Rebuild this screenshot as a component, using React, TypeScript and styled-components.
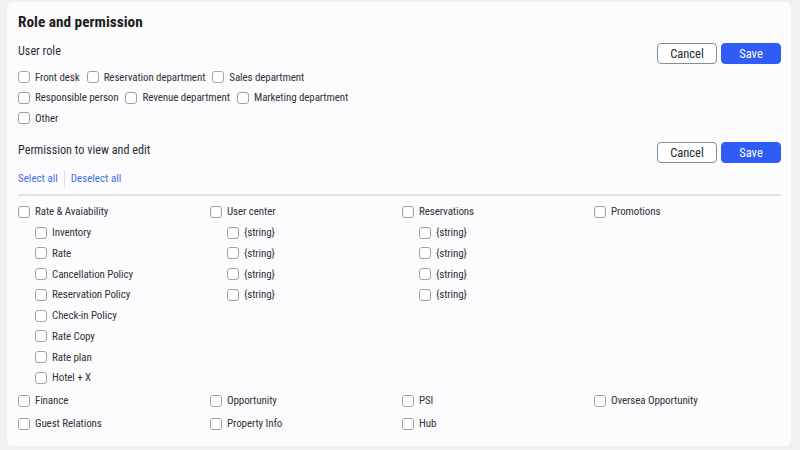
import React from "react";
import styled, { createGlobalStyle } from "styled-components";

const GlobalStyle = createGlobalStyle`
  html, body { margin: 0; padding: 0; }
  body {
    background: #f1f1f4;
    font-family: "Roboto Condensed", "Roboto", "Liberation Sans", sans-serif;
    color: #2a2a2e;
  }
  * { box-sizing: border-box; }
`;

const Page = styled.div`
  width: 800px;
  height: 450px;
  padding: 2px 9px 4px 7px;
`;

const Card = styled.div`
  height: 100%;
  background: #fcfcfe;
  border-radius: 6px;
  padding: 10px 10px 0 11px;
`;

const Title = styled.h1`
  margin: 0;
  font-size: 15.3px;
  line-height: 20px;
  font-weight: 700;
  color: #1c1c20;
`;

const SectionHead = styled.div<{ $mt: number }>`
  display: flex;
  justify-content: space-between;
  align-items: flex-start;
  margin-top: ${(p) => p.$mt}px;
`;

const SectionLabel = styled.div`
  font-size: 12.2px;
  line-height: 16px;
  color: #2e2e32;
`;

const Buttons = styled.div`
  display: flex;
  gap: 4px;
`;

const Button = styled.button<{ $primary?: boolean }>`
  width: 60px;
  height: 21px;
  border-radius: 4px;
  font-family: inherit;
  font-size: 12.5px;
  padding: 0;
  cursor: pointer;
  border: 1px solid ${(p) => (p.$primary ? "#2f5cf6" : "#8c8c90")};
  background: ${(p) => (p.$primary ? "#2f5cf6" : "#ffffff")};
  color: ${(p) => (p.$primary ? "#ffffff" : "#2a2a2e")};
`;

const RoleList = styled.div`
  margin-top: 2.75px;
  display: flex;
  flex-direction: column;
`;

const RoleRow = styled.div`
  display: flex;
  height: 20.5px;
  align-items: center;
`;

const Item = styled.label<{ $indent?: boolean; $h?: number }>`
  display: flex;
  align-items: center;
  gap: 5px;
  height: ${(p) => p.$h ?? 20.75}px;
  padding-left: ${(p) => (p.$indent ? 17 : 0)}px;
  margin-right: 7px;
  font-size: 11px;
  letter-spacing: -0.1px;
  color: #333337;
  white-space: nowrap;
`;

const Box = styled.span`
  display: inline-block;
  width: 12px;
  height: 12px;
  border: 1px solid #a2a2a8;
  border-radius: 3px;
  background: #ffffff;
  flex: none;
`;

const LinkRow = styled.div`
  display: flex;
  align-items: center;
  margin-top: 8px;
  height: 16px;
`;

const Link = styled.a`
  font-size: 11px;
  line-height: 16px;
  color: #3f6ee6;
  text-decoration: none;
  cursor: pointer;
`;

const VSep = styled.span`
  width: 1px;
  height: 16px;
  background: #dcdce0;
  margin: 0 6px;
`;

const Divider = styled.div`
  height: 2px;
  background: #e2e2e6;
  margin-top: 7px;
`;

const Grid = styled.div<{ $mt: number }>`
  display: grid;
  grid-template-columns: repeat(4, 192px);
  margin-top: ${(p) => p.$mt}px;
`;

const Column = styled.div`
  display: flex;
  flex-direction: column;
`;

function Check({ label, indent, h }: { label: string; indent?: boolean; h?: number }) {
  return (
    <Item $indent={indent} $h={h}>
      <Box />
      {label}
    </Item>
  );
}

const roleRows = [
  ["Front desk", "Reservation department", "Sales department"],
  ["Responsible person", "Revenue department", "Marketing department"],
  ["Other"],
];

const groups: { title: string; children: string[] }[] = [
  {
    title: "Rate & Avaiability",
    children: [
      "Inventory",
      "Rate",
      "Cancellation Policy",
      "Reservation Policy",
      "Check-in Policy",
      "Rate Copy",
      "Rate plan",
      "Hotel + X",
    ],
  },
  { title: "User center", children: ["{string}", "{string}", "{string}", "{string}"] },
  { title: "Reservations", children: ["{string}", "{string}", "{string}", "{string}"] },
  { title: "Promotions", children: [] },
];

const bottomItems = [
  "Finance",
  "Opportunity",
  "PSI",
  "Oversea Opportunity",
  "Guest Relations",
  "Property Info",
  "Hub",
];

export default function App() {
  return (
    <>
      <GlobalStyle />
      <Page>
        <Card>
          <Title>Role and permission</Title>

          <SectionHead $mt={11}>
            <SectionLabel>User role</SectionLabel>
            <Buttons>
              <Button>Cancel</Button>
              <Button $primary>Save</Button>
            </Buttons>
          </SectionHead>

          <RoleList>
            {roleRows.map((row, i) => (
              <RoleRow key={i}>
                {row.map((r) => (
                  <Check key={r} label={r} h={20.5} />
                ))}
              </RoleRow>
            ))}
          </RoleList>

          <SectionHead $mt={13.75}>
            <SectionLabel>Permission to view and edit</SectionLabel>
            <Buttons>
              <Button>Cancel</Button>
              <Button $primary>Save</Button>
            </Buttons>
          </SectionHead>

          <LinkRow>
            <Link>Select all</Link>
            <VSep />
            <Link>Deselect all</Link>
          </LinkRow>

          <Divider />

          <Grid $mt={5.6}>
            {groups.map((g) => (
              <Column key={g.title}>
                <Check label={g.title} />
                {g.children.map((c, i) => (
                  <Check key={i} label={c} indent />
                ))}
              </Column>
            ))}
          </Grid>

          <Grid $mt={1}>
            {bottomItems.map((b) => (
              <Check key={b} label={b} h={23} />
            ))}
          </Grid>
        </Card>
      </Page>
    </>
  );
}
